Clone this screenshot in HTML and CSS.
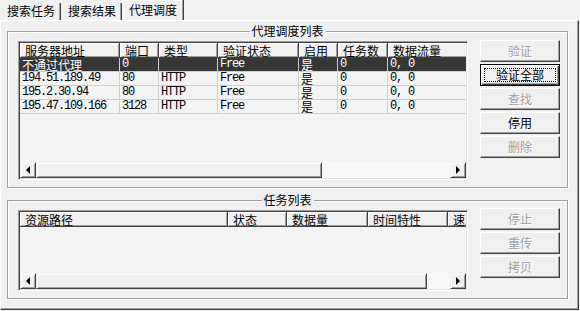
FILE: index.html
```html
<!DOCTYPE html>
<html lang="zh-CN">
<head>
    <meta charset="UTF-8">
    <meta name="viewport" content="width=device-width, initial-scale=1.0">
    <title>代理调度</title>
    <link rel="stylesheet" href="styles.css">
</head>
<body>
    <div class="tabs">
        <div class="tab">搜索任务</div>
        <div class="tab">搜索结果</div>
        <div class="tab active">代理调度</div>
    </div>

    <div class="panel">
        <!-- Proxy list -->
        <div class="group group-proxy">
            <span class="group-title">代理调度列表</span>
            <div class="listview list-proxy">
                <div class="lv-body">
                    <table class="proxy-table">
                        <colgroup>
                            <col style="width: 100px">
                            <col style="width: 39px">
                            <col style="width: 59px">
                            <col style="width: 81px">
                            <col style="width: 39px">
                            <col style="width: 50px">
                            <col style="width: 90px">
                        </colgroup>
                        <tr>
                            <th>服务器地址</th>
                            <th>端口</th>
                            <th>类型</th>
                            <th>验证状态</th>
                            <th>启用</th>
                            <th>任务数</th>
                            <th>数据流量</th>
                        </tr>
                        <tr class="sel">
                            <td>不通过代理</td>
                            <td class="mono">0</td>
                            <td class="mono"></td>
                            <td class="mono">Free</td>
                            <td>是</td>
                            <td class="mono">0</td>
                            <td class="mono">0, 0</td>
                        </tr>
                        <tr>
                            <td class="mono">194.51.189.49</td>
                            <td class="mono">80</td>
                            <td class="mono">HTTP</td>
                            <td class="mono">Free</td>
                            <td>是</td>
                            <td class="mono">0</td>
                            <td class="mono">0, 0</td>
                        </tr>
                        <tr>
                            <td class="mono">195.2.30.94</td>
                            <td class="mono">80</td>
                            <td class="mono">HTTP</td>
                            <td class="mono">Free</td>
                            <td>是</td>
                            <td class="mono">0</td>
                            <td class="mono">0, 0</td>
                        </tr>
                        <tr>
                            <td class="mono">195.47.109.166</td>
                            <td class="mono">3128</td>
                            <td class="mono">HTTP</td>
                            <td class="mono">Free</td>
                            <td>是</td>
                            <td class="mono">0</td>
                            <td class="mono">0, 0</td>
                        </tr>
                    </table>
                </div>
                <div class="hscroll">
                    <div class="sb-btn"><span class="arrow-left"></span></div>
                    <div class="sb-thumb thumb-proxy"></div>
                    <div class="sb-track"></div>
                    <div class="sb-btn"><span class="arrow-right"></span></div>
                </div>
            </div>
            <div class="buttons buttons-proxy">
                <button class="btn" disabled>验证</button>
                <button class="btn default">验证全部</button>
                <button class="btn" disabled>查找</button>
                <button class="btn">停用</button>
                <button class="btn" disabled>删除</button>
            </div>
        </div>

        <!-- Task list -->
        <div class="group group-task">
            <span class="group-title">任务列表</span>
            <div class="listview list-task">
                <div class="lv-body">
                    <table class="task-table">
                        <colgroup>
                            <col style="width: 208px">
                            <col style="width: 59px">
                            <col style="width: 81px">
                            <col style="width: 80px">
                            <col style="width: 60px">
                        </colgroup>
                        <tr>
                            <th>资源路径</th>
                            <th>状态</th>
                            <th>数据量</th>
                            <th>时间特性</th>
                            <th>速度</th>
                        </tr>
                    </table>
                </div>
                <div class="hscroll">
                    <div class="sb-btn"><span class="arrow-left"></span></div>
                    <div class="sb-thumb thumb-task"></div>
                    <div class="sb-track"></div>
                    <div class="sb-btn"><span class="arrow-right"></span></div>
                </div>
            </div>
            <div class="buttons buttons-task">
                <button class="btn" disabled>停止</button>
                <button class="btn" disabled>重传</button>
                <button class="btn" disabled>拷贝</button>
            </div>
        </div>
    </div>
</body>
</html>
```

FILE: styles.css
```css
body {
    margin: 0;
    width: 580px;
    height: 311px;
    overflow: hidden;
    background-color: #f0f0f0;
    font-family: "Noto Sans CJK SC", "Liberation Sans", sans-serif;
    font-size: 12px;
    color: #000;
}

/* Tab strip */
.tabs {
    display: flex;
    align-items: flex-end;
    height: 20px;
}

.tab {
    height: 17px;
    line-height: 15px;
    padding: 0 5px 0 7px;
    box-sizing: border-box;
    border-right: 1px solid #404040;
    box-shadow: inset -1px 0 #a0a0a0;
}

.tab.active {
    height: 20px;
    line-height: 20px;
    padding: 0 6px 0 6px;
    margin-left: 1px;
    box-shadow: inset -1px 0 #a0a0a0, inset 1px 1px #fff;
}

.panel {
    width: 579px;
    height: 290px;
    box-sizing: border-box;
    border-top: 1px solid #fff;
    border-left: 1px solid #fff;
    border-right: 1px solid #404040;
    border-bottom: 1px solid #404040;
    box-shadow: inset -1px -1px #a0a0a0;
    padding: 10px 0 0 6px;
}

/* Group boxes */
.group {
    position: relative;
    display: flex;
    align-items: flex-start;
    width: 561px;
    box-sizing: border-box;
    border: 1px solid #a0a0a0;
    box-shadow: 1px 1px #fff, inset 1px 1px #fff;
    padding: 9px 0 0 10px;
}

.group-proxy {
    height: 157px;
}

.group-task {
    height: 99px;
    margin-top: 12px;
}

.group-title {
    position: absolute;
    top: -8px;
    left: 50%;
    transform: translateX(-50%);
    padding: 0 2px;
    line-height: 14px;
    background-color: #f0f0f0;
}

/* List views */
.listview {
    display: flex;
    flex-direction: column;
    width: 450px;
    box-sizing: border-box;
    border-top: 1px solid #a0a0a0;
    border-left: 1px solid #a0a0a0;
    border-right: 1px solid #fff;
    border-bottom: 1px solid #fff;
    box-shadow: inset 1px 1px #404040, inset -1px -1px #e3e3e3;
    padding: 1px;
    background-color: #f4f4f4;
}

.list-proxy {
    height: 139px;
}

.list-task {
    height: 81px;
}

.lv-body {
    flex: 1;
    overflow: hidden;
}

table {
    border-collapse: separate;
    border-spacing: 0;
    table-layout: fixed;
}

.proxy-table {
    width: 458px;
}

.task-table {
    width: 488px;
}

th {
    height: 15px;
    padding: 0 0 0 5px;
    box-sizing: border-box;
    line-height: 13px;
    text-align: left;
    font-weight: normal;
    white-space: nowrap;
    overflow: hidden;
    background-color: #f0f0f0;
    border-right: 1px solid #404040;
    border-bottom: 1px solid #404040;
    box-shadow: inset 1px 1px #fff, inset -1px -1px #a0a0a0;
}

td {
    height: 14px;
    padding: 0 0 0 2px;
    box-sizing: border-box;
    line-height: 13px;
    white-space: nowrap;
    border-right: 1px solid #cfcfcf;
    border-bottom: 1px solid #cfcfcf;
}

td.mono {
    font-family: "Liberation Mono", "Noto Sans CJK SC", monospace;
    font-size: 12px;
    letter-spacing: -1.2px;
    overflow: hidden;
}

tr.sel td {
    background-color: #363636;
    color: #fff;
}

/* Horizontal scroll bar */
.hscroll {
    display: flex;
    height: 16px;
    background-color: #f8f8f8;
}

.sb-btn,
.sb-thumb {
    height: 16px;
    box-sizing: border-box;
    background-color: #f0f0f0;
    border: 1px solid;
    border-color: #f0f0f0 #404040 #404040 #f0f0f0;
    box-shadow: inset 1px 1px #fff, inset -1px -1px #a0a0a0;
}

.sb-btn {
    display: flex;
    align-items: center;
    justify-content: center;
    width: 16px;
}

.thumb-proxy {
    width: 286px;
}

.thumb-task {
    width: 391px;
}

.sb-track {
    flex: 1;
}

.arrow-left {
    border-top: 4px solid transparent;
    border-bottom: 4px solid transparent;
    border-right: 4px solid #000;
}

.arrow-right {
    border-top: 4px solid transparent;
    border-bottom: 4px solid transparent;
    border-left: 4px solid #000;
}

/* Push buttons */
.buttons {
    display: flex;
    flex-direction: column;
    gap: 2px;
    margin-left: 12px;
}

.buttons-proxy {
    margin-top: -1px;
}

.buttons-task {
    margin-top: -2px;
}

.btn {
    width: 80px;
    height: 22px;
    box-sizing: border-box;
    padding: 0;
    border: 1px solid;
    border-color: #fff #404040 #404040 #fff;
    box-shadow: inset -1px -1px #a0a0a0;
    background-color: #f0f0f0;
    font: inherit;
    line-height: 18px;
    color: #000;
    text-align: center;
}

.btn:disabled {
    color: #a0a0a0;
    text-shadow: 1px 1px #fff;
}

.btn.default {
    border-color: #000;
    box-shadow: inset 1px 1px #fff, inset -1px -1px #404040, inset -2px -2px #a0a0a0;
    outline: 1px dotted #000;
    outline-offset: -5px;
}
```
